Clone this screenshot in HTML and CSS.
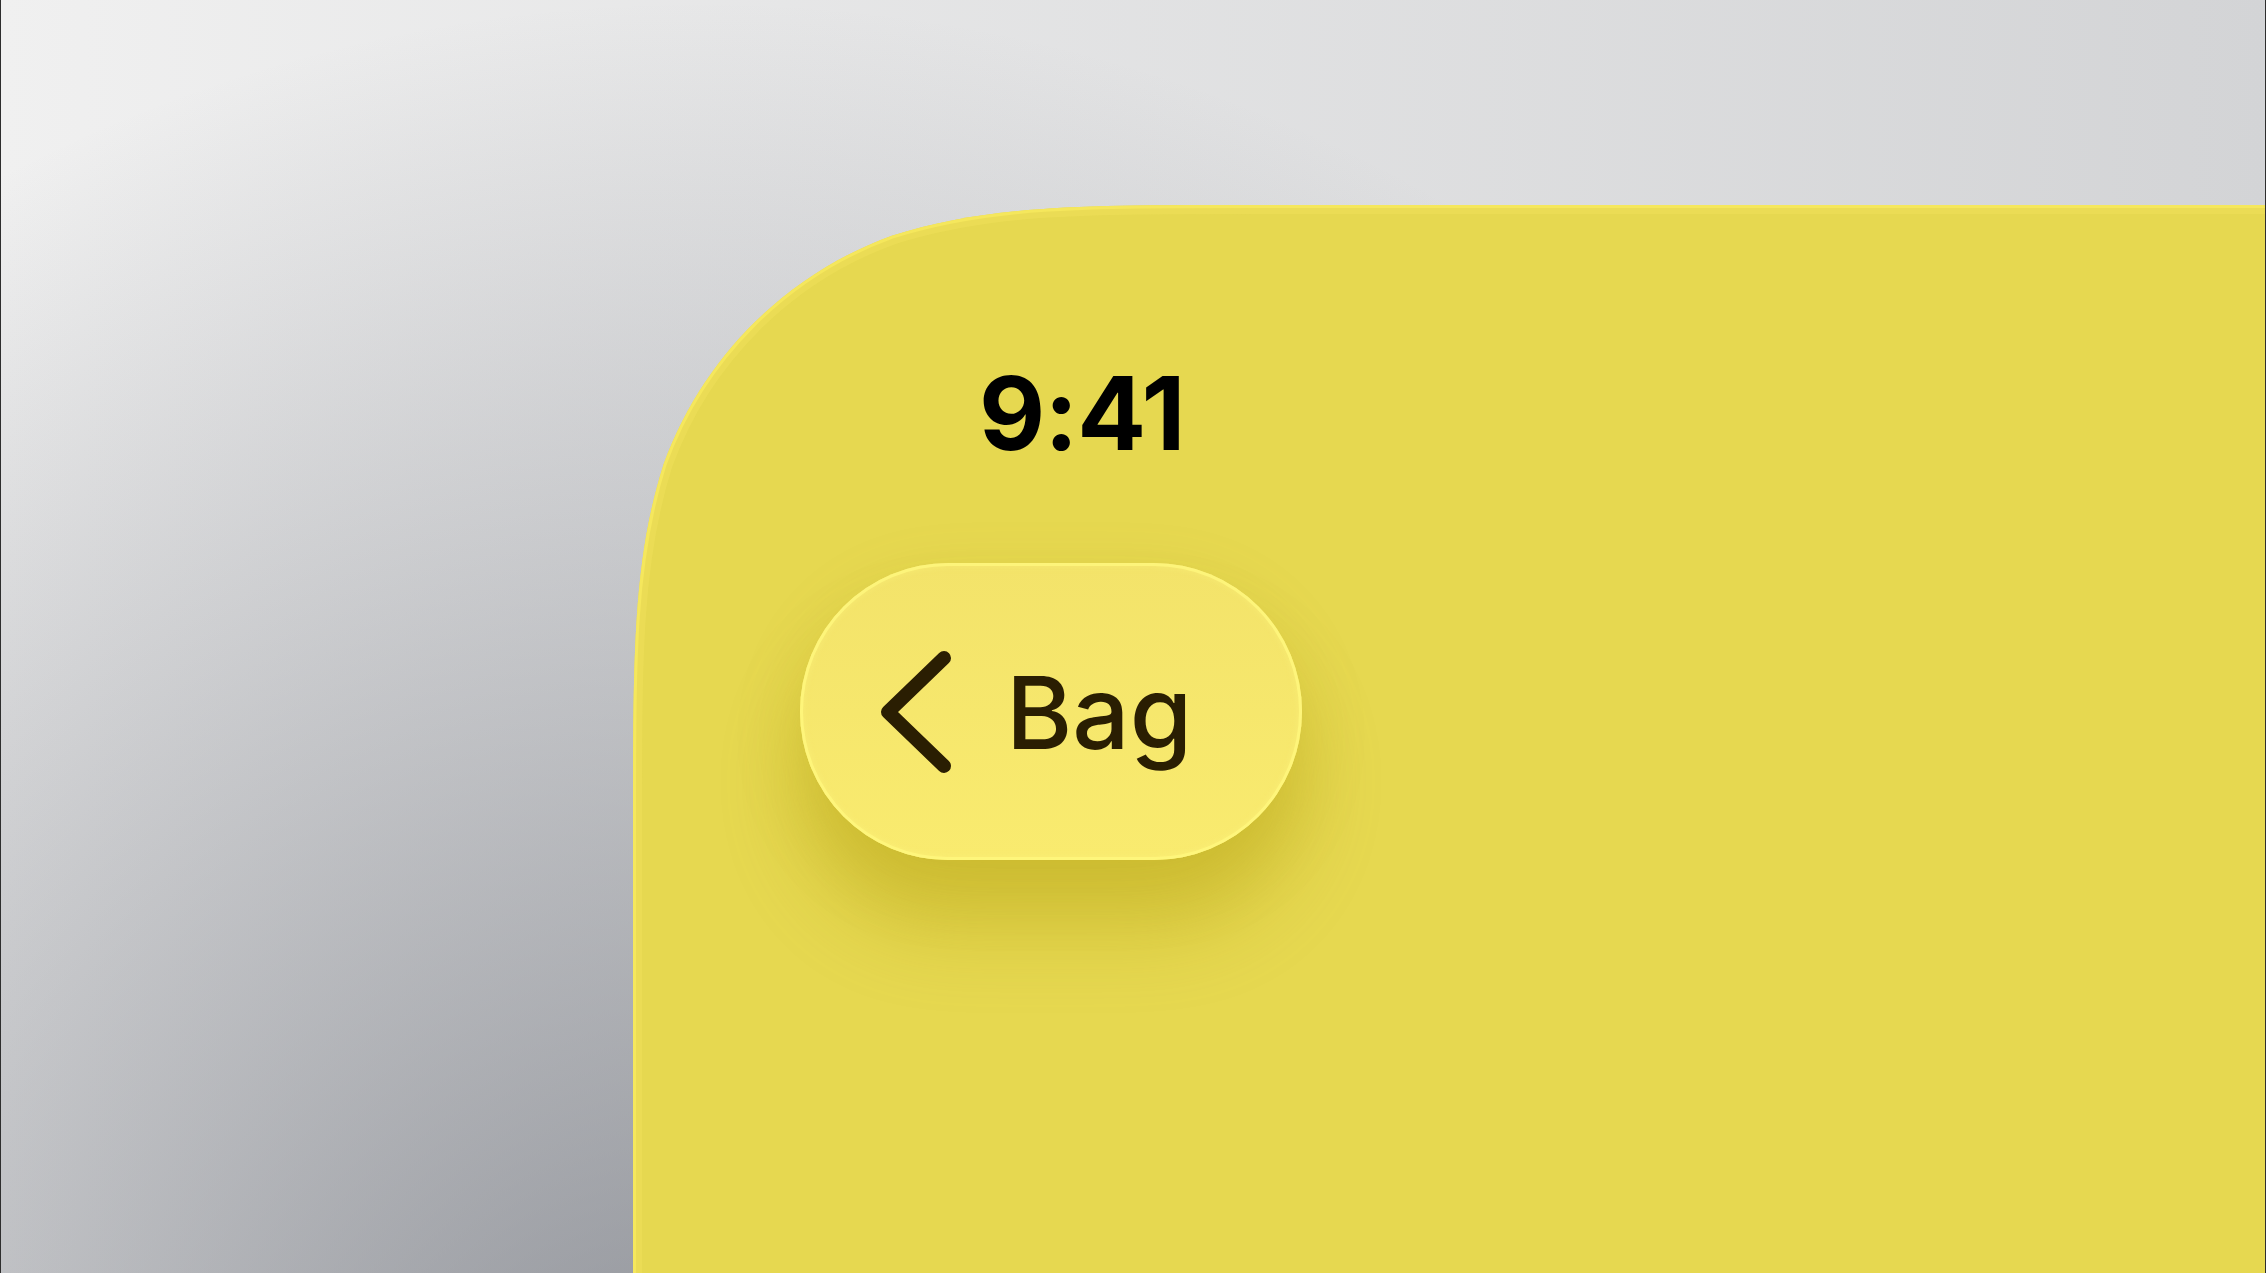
FILE: index.html
```html
<!DOCTYPE html>
<html lang="en">
<head>
<meta charset="utf-8">
<title>Bag</title>
<link rel="stylesheet" href="styles.css">
</head>
<body>
  <div class="stage">
    <main class="panel">
      <div class="time">9:41</div>
      <button class="back" type="button">
        <svg class="chev" width="76" height="124" viewBox="0 0 76 124" aria-hidden="true">
          <path d="M68 8 L12 62 L68 116" fill="none" stroke="#2a1e02" stroke-width="14" stroke-linecap="round" stroke-linejoin="round"/>
        </svg>
        <span class="label">Bag</span>
      </button>
    </main>
  </div>
</body>
</html>
```

FILE: styles.css
```css
html, body {
  margin: 0;
  height: 100%;
}

body {
  overflow: hidden;
  box-sizing: border-box;
  border-left: 1px solid #2e2e2e;
  border-right: 1px solid #2e2e2e;
  background:
    radial-gradient(circle at 700px 1500px, rgba(96, 100, 110, 0.66) 0, rgba(96, 100, 110, 0) 1500px),
    linear-gradient(to right, #f0f0f0, #d3d4d6);
  font-family: Inter, "Noto Sans", sans-serif;
}

.stage {
  display: flex;
  height: 100vh;
  box-sizing: border-box;
  padding: 205px 0 0 632px;
}

/* panel with a continuous (squircle) top-left corner */
.panel {
  flex: 1;
  display: flex;
  flex-direction: column;
  align-items: flex-start;
  padding-top: 158px;
  background: url("data:image/svg+xml,%3Csvg xmlns='http://www.w3.org/2000/svg' width='3000' height='3000'%3E%3Cdefs%3E%3CclipPath id='c'%3E%3Cpath d='M0 3000 L0 626.75 C0 446.28 0 356.05 30.71 258.91 C69.31 152.86 152.86 69.31 258.91 30.71 C356.05 0 446.28 0 626.75 0 L3000 0 L3000 3000 Z'/%3E%3C/clipPath%3E%3C/defs%3E%3Cpath d='M0 3000 L0 626.75 C0 446.28 0 356.05 30.71 258.91 C69.31 152.86 152.86 69.31 258.91 30.71 C356.05 0 446.28 0 626.75 0 L3000 0 L3000 3000 Z' fill='%23e6d850'/%3E%3Cpath d='M0 3000 L0 626.75 C0 446.28 0 356.05 30.71 258.91 C69.31 152.86 152.86 69.31 258.91 30.71 C356.05 0 446.28 0 626.75 0 L3000 0' fill='none' stroke='%23f3e55e' stroke-opacity='0.35' stroke-width='18' clip-path='url(%23c)'/%3E%3Cpath d='M0 3000 L0 626.75 C0 446.28 0 356.05 30.71 258.91 C69.31 152.86 152.86 69.31 258.91 30.71 C356.05 0 446.28 0 626.75 0 L3000 0' fill='none' stroke='%23f5e75c' stroke-width='6' clip-path='url(%23c)'/%3E%3C/svg%3E") no-repeat 0 0;
}

.time {
  margin-left: 346px;
  font-size: 102px;
  line-height: 100px;
  font-weight: 700;
  letter-spacing: -1px;
  color: #000;
}

.back {
  margin: 100px 0 0 167px;
  width: 502px;
  height: 297px;
  box-sizing: border-box;
  padding: 0 0 0 76px;
  border: none;
  border-radius: 150px;
  display: flex;
  align-items: center;
  gap: 54px;
  background: linear-gradient(to bottom, #f3e36a, #f9eb6f);
  box-shadow:
    inset 0 0 0 3px rgba(255, 248, 125, 0.8),
    inset 0 0 6px 4px rgba(255, 246, 130, 0.3),
    0 70px 80px rgba(165, 145, 0, 0.3),
    0 25px 70px rgba(165, 145, 0, 0.16);
  font: inherit;
  cursor: pointer;
}

.chev {
  display: block;
  flex: none;
}

.label {
  font-size: 101px;
  line-height: 100px;
  font-weight: 500;
  color: #2a1e02;
}
```
